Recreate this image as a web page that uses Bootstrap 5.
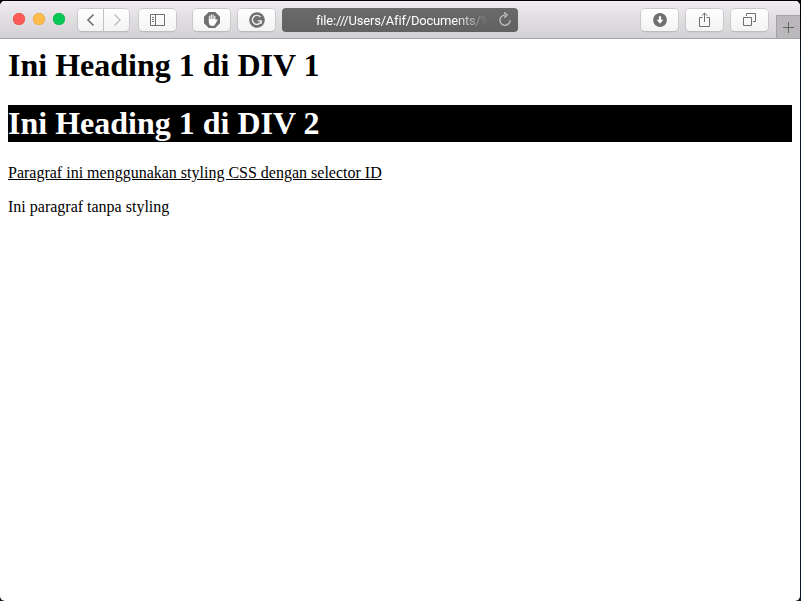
<!DOCTYPE html>
<html lang="id">
<head>
<meta charset="utf-8">
<meta name="viewport" content="width=device-width, initial-scale=1">
<title>Selector CSS</title>
<link href="https://cdn.jsdelivr.net/npm/bootstrap@5.3.0/dist/css/bootstrap.min.css" rel="stylesheet">
<style>
html, body { height: 100%; }
body { background: #06121c; overflow: hidden; }
.desk { height: 601px; background: linear-gradient(#000 0 2px, #0a1722 60px); padding: 1px 1px 0 0; }
.browser { height: 600px; border-radius: 5px; background: #fff; }
.toolbar { height: 38px; background: linear-gradient(#f0ecf1, #e5e2e6 35%, #d3d1d4); border-bottom: 1px solid #a5a4a6; box-shadow: inset 0 1px #f6f3f7; padding-left: 13px; }
.dots { gap: 8px; margin: 0 13px 1px 0; }
.dot { width: 12px; height: 12px; }
.dot-red { background: #fc5b57; box-shadow: inset 0 0 0 .5px #df4744; }
.dot-yellow { background: #fdbc4b; box-shadow: inset 0 0 0 .5px #dea03a; }
.dot-green { background: #06c856; box-shadow: inset 0 0 0 .5px #10a844; }
.tool { width: 37px; height: 22px; padding: 0; border: 0; border-radius: 4px; background: linear-gradient(#fefefe, #f4f3f4); box-shadow: 0 0 0 .7px #c2c0c3, 0 1px 0 .2px #b5b3b6; color: #707070; }
.tool svg, .reload svg { display: block; }
.tool-nav { width: 25px; }
.nav-pair { gap: 1px; margin-right: 10px; }
.after-sidebar { margin-left: 17px; margin-right: 8px; }
.tool-group { gap: 8px; }
.address { width: 236px; height: 24px; border-radius: 4px; background: linear-gradient(#6b6a6b, #626162); color: #fff; font: 13px/22px Roboto, sans-serif; padding-left: 34px; margin-left: 7px; }
.url { width: 173px; padding-top: 2px; letter-spacing: -.2px; -webkit-mask-image: linear-gradient(90deg, #000 138px, transparent 173px); mask-image: linear-gradient(90deg, #000 138px, transparent 173px); }
.reload { color: #c6c5c6; margin-left: 9px; }
.newtab { width: 24px; height: 23px; margin-left: 8px; background: #bab8bb; border: 1px solid #a4a2a5; border-width: 1px 0 0 1px; color: #656465; }
.page { padding: 8px 8px 0; color: #000; font: 16px/18px "Liberation Serif", serif; }
.page h1 { font: bold 32px/37px "Liberation Serif", serif; margin: 0 0 21px; }
.page p { margin: 0 0 16px; }
.page .styled-text { margin-top: 22px; }
</style>
</head>
<body>
<div class="desk">
<div class="browser overflow-hidden">
  <header class="toolbar d-flex align-items-center">
    <div class="dots d-flex"><span class="dot dot-red rounded-circle"></span><span class="dot dot-yellow rounded-circle"></span><span class="dot dot-green rounded-circle"></span></div>
    <div class="nav-pair d-flex">
      <button class="tool tool-nav d-flex align-items-center justify-content-center rounded-end-0" aria-label="Back"><svg width="10" height="14" fill="none" stroke="currentColor" stroke-width="1.6"><path d="M7.5 1.5 2 7l5.5 5.5"/></svg></button>
      <button class="tool tool-nav d-flex align-items-center justify-content-center rounded-start-0" aria-label="Forward"><svg width="10" height="14" fill="none" stroke="#bcbbbc" stroke-width="1.4"><path d="M2.5 1.5 8 7l-5.5 5.5"/></svg></button>
    </div>
    <button class="tool d-flex align-items-center justify-content-center" aria-label="Sidebar"><svg width="15" height="12" fill="none" stroke="currentColor"><path d="M.5.5h14v11H.5zM5.5.5v11M2 3.5h2M2 5.5h2M2 7.5h2"/></svg></button>
    <button class="tool after-sidebar d-flex align-items-center justify-content-center" aria-label="Block"><svg width="16" height="16"><path fill="currentColor" d="M4.8 0h6.4L16 4.8v6.4L11.2 16H4.8L0 11.2V4.8z"/><path fill="none" stroke="#e8e8e8" stroke-width="1.3" stroke-linecap="round" d="M5.5 8.5V4.1M7.3 7.5V2.8M9.1 7.5V3.1M10.8 8.5V4.3"/><path fill="#fff" d="M4.8 7h6.8v1.5l1.2-1.2c.5-.4 1.1.1.8.6l-2.6 4.5c-.6 1.1-1.5 1.5-2.7 1.5-2.1 0-3.5-1.2-3.5-3.3z"/></svg></button>
    <button class="tool d-flex align-items-center justify-content-center" aria-label="Grammar"><svg width="16" height="16"><circle cx="8" cy="8" r="7.8" fill="currentColor"/><path fill="none" stroke="#eee" stroke-width="1.4" d="M11.4 5A4.5 4.5 0 1 0 12.2 9.2"/><path fill="none" stroke="#eee" stroke-width="1.2" d="M8.7 8.8h3.6v3"/></svg></button>
    <div class="address d-flex align-items-center"><span class="url text-nowrap">file:///Users/Afif/Documents/%</span><span class="reload"><svg width="14" height="15" fill="none" stroke="currentColor" stroke-width="1.3"><path d="M7 3.1A5.1 5.1 0 1 0 12.1 8.2M6.2.4 9.2 3.1 6.2 5.8"/></svg></span></div>
    <div class="tool-group d-flex ms-auto">
      <button class="tool d-flex align-items-center justify-content-center" aria-label="Downloads"><svg width="14" height="14"><circle cx="7" cy="7" r="6.9" fill="currentColor"/><path fill="#fff" d="M5.9 3.2h2.2v3.6h2.3L7 10.8 3.6 6.8h2.3z"/></svg></button>
      <button class="tool d-flex align-items-center justify-content-center" aria-label="Share"><svg width="13" height="16" fill="none" stroke="currentColor"><path d="M4.5 5.5h-3v9h10v-9h-3M6.5 10V1.2M3.7 3.8l2.8-2.8 2.8 2.8"/></svg></button>
      <button class="tool d-flex align-items-center justify-content-center" aria-label="Tabs"><svg width="13" height="13" fill="none" stroke="currentColor"><path d="M.5 4.5h8v8h-8zM3.5 3V.5h9v8H10"/></svg></button>
    </div>
    <div class="newtab d-flex align-items-center justify-content-center align-self-end"><svg width="11" height="11" stroke="currentColor"><path d="M5.5 0v11M0 5.5h11"/></svg></div>
  </header>
  <main class="page">
    <div><h1>Ini Heading 1 di DIV 1</h1></div>
    <div><h1 class="bg-black text-white">Ini Heading 1 di DIV 2</h1></div>
    <p class="styled-text text-decoration-underline">Paragraf ini menggunakan styling CSS dengan selector ID</p>
    <p>Ini paragraf tanpa styling</p>
  </main>
</div>
</div>
<script src="https://cdn.jsdelivr.net/npm/bootstrap@5.3.0/dist/js/bootstrap.bundle.min.js"></script>
</body>
</html>
